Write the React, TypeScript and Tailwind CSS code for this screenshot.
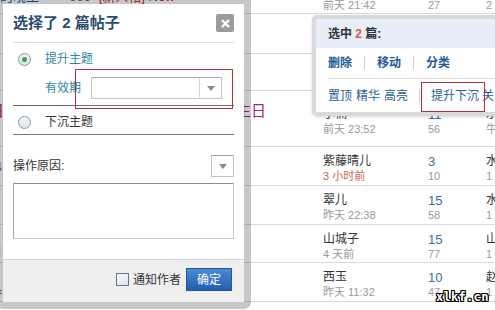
import React from "react";

interface Row {
  h: number;
  pt: number;
  left?: React.ReactNode;
  leftPt?: number;
  name?: string;
  time?: string;
  hot?: boolean;
  c1?: string;
  c2?: string;
  l1?: string;
  l2?: string;
}

const rows: Row[] = [
  {
    h: 38,
    pt: 7,
    leftPt: 13,
    left: (
      <div className="flex items-center text-[13px] leading-[15px]">
        <span className="ml-[11px] text-[#2a5d93]">的晓王</span>
        <span className="ml-[30px] text-[#666]">666</span>
        <span className="ml-[8px] text-[#c03030]">[新人帖] New</span>
      </div>
    ),
    name: "诗韵",
    time: "前天 21:42",
    c1: "4",
    c2: "27",
    l1: "水",
    l2: "2",
  },
  { h: 40, pt: 7, name: "清风", time: "前天 20:15", c1: "6", c2: "31", l1: "水", l2: "1" },
  {
    h: 37,
    pt: 7,
    leftPt: 10,
    left: <span className="text-[13px] text-[#333]">：</span>,
    name: "晓月",
    time: "前天 19:08",
    c1: "2",
    c2: "19",
    l1: "水",
    l2: "1",
  },
  {
    h: 56,
    pt: 16,
    leftPt: 11,
    left: (
      <div className="flex w-[277px] justify-between text-[15px] leading-[17px] text-[#a3267a]">
        <span>日</span>
        <span>生日</span>
      </div>
    ),
    name: "小楠",
    time: "前天 23:52",
    c1: "11",
    c2: "56",
    l1: "水",
    l2: "牛",
  },
  {
    h: 39,
    pt: 7,
    leftPt: 5,
    left: <span className="text-[13px] text-[#7a2a8a]">色</span>,
    name: "紫藤晴儿",
    time: "3 小时前",
    hot: true,
    c1: "3",
    c2: "10",
    l1: "水",
    l2: "1",
  },
  {
    h: 39,
    pt: 7,
    leftPt: 12,
    left: <span className="text-[13px] text-[#333]">：</span>,
    name: "翠儿",
    time: "昨天 22:38",
    c1: "15",
    c2: "58",
    l1: "水",
    l2: "1",
  },
  {
    h: 38,
    pt: 7,
    leftPt: 13,
    left: <span className="text-[13px] text-[#a3267a]">日</span>,
    name: "山城子",
    time: "4 天前",
    c1: "15",
    c2: "77",
    l1: "山",
    l2: "1",
  },
  {
    h: 39,
    pt: 7,
    leftPt: 12,
    left: <span className="text-[13px] text-[#2a5d93]">具</span>,
    name: "西玉",
    time: "昨天 11:32",
    c1: "10",
    c2: "47",
    l1: "赵",
    l2: "1",
  },
  { h: 40, pt: 7, name: "", time: "" },
];

function Radio({ checked }: { checked?: boolean }) {
  return (
    <span className="flex h-[13px] w-[13px] items-center justify-center rounded-full border border-[#8796a8] bg-gradient-to-b from-[#f4f6f8] to-[#dde2e8]">
      {checked && <span className="h-[5px] w-[5px] rounded-full bg-[#3aa64a]" />}
    </span>
  );
}

function Arrow() {
  return (
    <svg width="8" height="5" viewBox="0 0 8 5">
      <path d="M0 0 L8 0 L4 5 Z" fill="#8a8a8a" />
    </svg>
  );
}

export default function App() {
  return (
    <div className="relative h-[310px] w-[495px] overflow-hidden bg-white font-['Liberation_Sans','Noto_Sans_CJK_SC',sans-serif]">
      {/* forum list behind */}
      <div className="mt-[-24px] flex flex-col">
        {rows.map((r, i) => (
          <div
            key={i}
            className="flex border-b border-[#d4dae1]"
            style={{ height: r.h }}
          >
            <div className="ml-[-11px] w-[334px] shrink-0" style={{ paddingTop: r.leftPt ?? 0 }}>
              {r.left}
            </div>
            <div className="w-[105px] shrink-0" style={{ paddingTop: r.pt }}>
              <div className="text-[12px] leading-[15px] text-[#333]">{r.name}</div>
              <div
                className={
                  "text-[11px] leading-[14px] " +
                  (r.hot ? "text-[#c4694f]" : "text-[#9a9a9a]")
                }
              >
                {r.time}
              </div>
            </div>
            <div className="w-[58px] shrink-0" style={{ paddingTop: r.pt }}>
              <div className="text-[13px] leading-[15px] text-[#3b6ea6]">{r.c1}</div>
              <div className="text-[11px] leading-[14px] text-[#9a9a9a]">{r.c2}</div>
            </div>
            <div className="flex-1" style={{ paddingTop: r.pt }}>
              <div className="text-[12px] leading-[15px] text-[#333]">{r.l1}</div>
              <div className="text-[11px] leading-[14px] text-[#9a9a9a]">{r.l2}</div>
            </div>
          </div>
        ))}
      </div>

      {/* move dialog */}
      <div className="absolute left-[-4px] top-[-3px] rounded-b-[7px] border-[7px] border-[rgba(0,0,0,0.22)] bg-clip-padding">
        <div className="relative flex h-[298px] w-[241px] flex-col bg-white">
          <div className="flex h-[38px] items-center justify-between px-[10px]">
            <span className="text-[15px] font-bold text-[#2d4d6e]">选择了 2 篇帖子</span>
            <span className="flex h-[18px] w-[18px] items-center justify-center rounded-[2px] bg-[#9c9c9c]">
              <svg width="9" height="9" viewBox="0 0 9 9">
                <path d="M1 1 L8 8 M8 1 L1 8" stroke="#fff" strokeWidth="2.4" />
              </svg>
            </span>
          </div>
          <div className="mx-[10px] h-px bg-[#dcdcdc]" />

          <div className="flex flex-1 flex-col px-[10px]">
            <div className="mt-[6px] flex h-[20px] items-center pl-[5px]">
              <Radio checked />
              <span className="ml-[14px] text-[12px] text-[#2b87a6]">提升主题</span>
            </div>
            <div className="mt-[8px] flex h-[22px] items-center pl-[32px]">
              <span className="text-[12px] text-[#2b87a6]">有效期</span>
              <div className="ml-[10px] flex h-[22px] w-[131px] border border-[#c6c6c6] border-t-[#a9a9a9]">
                <div className="flex-1" />
                <div className="flex w-[22px] items-center justify-center border-l border-[#d6d6d6]">
                  <Arrow />
                </div>
              </div>
            </div>
            <div className="mt-[6px] h-px bg-[#6b6b6b]" />
            <div className="mt-[6px] flex h-[20px] items-center pl-[5px]">
              <Radio />
              <span className="ml-[14px] text-[12px] text-[#333]">下沉主题</span>
            </div>
            <div className="mt-[2px] h-px bg-[#777]" />

            <div className="mt-[20px] flex h-[22px] items-center justify-between">
              <span className="text-[12px] text-[#333]">操作原因:</span>
              <div className="flex h-[22px] w-[23px] items-center justify-center border border-[#c6c6c6] border-t-[#a9a9a9]">
                <Arrow />
              </div>
            </div>
            <div className="mt-[6px] h-[56px] border border-[#c9c9c9] border-t-[#8f8f8f] border-l-[#a6a6a6]" />
          </div>

          <div className="flex h-[43px] items-center justify-end border-t border-[#d2d2d2] bg-[#efefef] pb-[3px] pr-[12px]">
            <span className="h-[13px] w-[13px] border border-[#5f7590] bg-gradient-to-br from-[#f8f9fb] to-[#dfe4ea]" />
            <span className="ml-[4px] text-[12px] text-[#333]">通知作者</span>
            <span className="ml-[5px] flex h-[23px] w-[46px] items-center justify-center border border-[#1f5599] bg-gradient-to-b from-[#4a8ad6] to-[#215fb0] text-[12px] text-white">
              确定
            </span>
          </div>

          <div className="absolute left-[72px] top-[65px] h-[40px] w-[158px] border border-[#b3313a]" />
        </div>
      </div>

      {/* selection popup */}
      <div className="absolute left-[312px] top-[15px] w-[192px] rounded-[5px] border-[4px] border-[#dadada] bg-white bg-clip-padding shadow-[0_1px_3px_rgba(0,0,0,0.15)]">
        <div className="flex h-[29px] items-center bg-[#e7eef8] pl-[12px] text-[12px] font-bold text-[#333]">
          选中&nbsp;<span className="text-[#e0524a]">2</span>&nbsp;篇:
        </div>
        <div className="flex h-[30px] items-center pl-[12px] text-[12px] font-bold text-[#1d5a96]">
          <span>删除</span>
          <span className="mx-[12px] h-[14px] w-px bg-[#cfcfcf]" />
          <span>移动</span>
          <span className="mx-[12px] h-[14px] w-px bg-[#cfcfcf]" />
          <span>分类</span>
        </div>
        <div className="ml-[12px] h-px bg-[#e2e2e2]" />
        <div className="flex h-[33px] items-center gap-[4px] whitespace-nowrap pl-[12px] text-[12px] text-[#2a6194]">
          <span>置顶</span>
          <span>精华</span>
          <span>高亮</span>
          <span className="mx-[7px] h-[14px] w-px bg-[#d6d6d6]" />
          <span>提升下沉</span>
          <span className="ml-[-1px]">关</span>
        </div>
      </div>
      <div className="absolute left-[421px] top-[82px] h-[30px] w-[64px] border border-[#b3313a]" />

      {/* watermark */}
      <div className="absolute left-[436px] top-[290px] font-['DejaVu_Sans_Mono',monospace] text-[12px] font-bold leading-[14px] tracking-[0.3px] text-white [text-shadow:1px_0_#000,-1px_0_#000,0_1px_#000,0_-1px_#000,1px_1px_#000,-1px_-1px_#000,1px_-1px_#000,-1px_1px_#000]">
        xlkf.cn
      </div>
    </div>
  );
}
